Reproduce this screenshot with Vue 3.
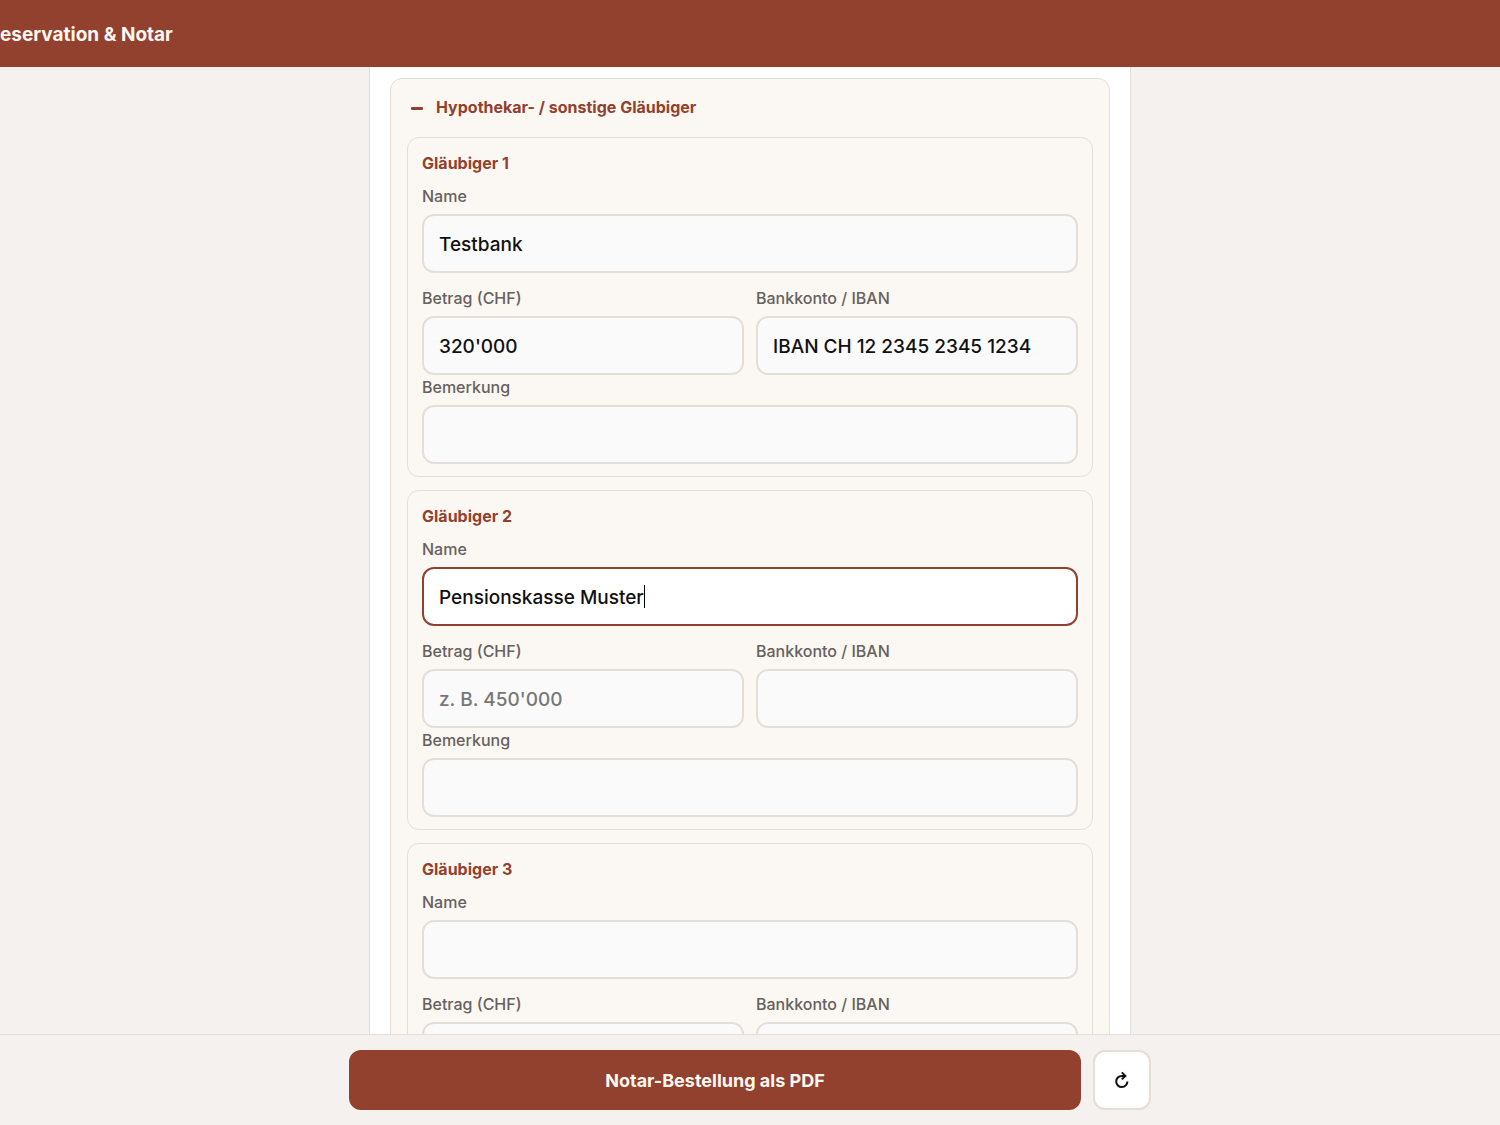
<script setup>
import { reactive } from 'vue'

const creditors = reactive([
  { id: 1, name: 'Testbank', amount: "320'000", iban: 'IBAN CH 12 2345 2345 1234', note: '', active: false },
  { id: 2, name: 'Pensionskasse Muster', amount: '', iban: '', note: '', active: true },
  { id: 3, name: '', amount: '', iban: '', note: '', active: false },
])
</script>

<template>
  <div class="app">
    <header class="topbar">
      <h1>eservation &amp; Notar</h1>
    </header>

    <main class="content">
      <div class="sheet">
        <section class="panel">
          <button type="button" class="panel-toggle" aria-expanded="true">
            <svg class="minus" viewBox="0 0 12 24" aria-hidden="true"><rect x="0" y="12" width="12" height="3" rx="1" /></svg>
            <span>Hypothekar- / sonstige Gläubiger</span>
          </button>

          <fieldset v-for="c in creditors" :key="c.id" class="group">
            <h2>Gläubiger {{ c.id }}</h2>
            <div class="field spaced">
              <label :for="`name-${c.id}`">Name</label>
              <div class="control">
                <input :id="`name-${c.id}`" v-model="c.name" type="text" :class="{ active: c.active }" />
                <span v-if="c.active" class="caret" aria-hidden="true"></span>
              </div>
            </div>
            <div class="row">
              <div class="field">
                <label :for="`amount-${c.id}`">Betrag (CHF)</label>
                <input :id="`amount-${c.id}`" v-model="c.amount" type="text" placeholder="z. B. 450'000" />
              </div>
              <div class="field">
                <label :for="`iban-${c.id}`">Bankkonto / IBAN</label>
                <input :id="`iban-${c.id}`" v-model="c.iban" type="text" />
              </div>
            </div>
            <div class="field">
              <label :for="`note-${c.id}`">Bemerkung</label>
              <input :id="`note-${c.id}`" v-model="c.note" type="text" />
            </div>
          </fieldset>
        </section>
      </div>
    </main>

    <footer class="actions">
      <div class="actions-inner">
        <button type="button" class="primary">Notar-Bestellung als PDF</button>
        <button type="button" class="reset" aria-label="Zurücksetzen">
          <svg viewBox="0 0 16 18" aria-hidden="true">
            <path d="M13.4 10.4A5.6 5.6 0 1 1 7.8 4.9H10.8" />
            <path d="M7.8 1.4L11.4 4.9L7.8 8.4" />
          </svg>
        </button>
      </div>
    </footer>
  </div>
</template>

<style>
body {
  margin: 0;
}
</style>

<style scoped>
.app {
  --brand: #91412d;
  --ground: #f5f1ee;
  --line: #e3ded9;
  display: flex;
  flex-direction: column;
  height: 100vh;
  background: var(--ground);
  font-family: Inter, "Liberation Sans", sans-serif;
  font-size: 16px;
  line-height: 24px;
  color: #111;
}

*,
*::before {
  box-sizing: border-box;
}

h1,
h2 {
  margin: 0;
}

button,
input {
  font: inherit;
}

.topbar {
  flex: none;
  padding: 23px 0 20px;
  background: var(--brand);
  color: #fff7f2;
}

h1 {
  font-size: 19px;
  font-weight: 700;
}

.content {
  flex: 1;
  min-height: 0;
  overflow-y: auto;
  scrollbar-width: none;
}

.sheet {
  max-width: 762px;
  margin: 0 auto;
  padding: 11px 20px 20px;
  border: 1px solid var(--line);
  border-top: 0;
  background: #fff;
}

.panel {
  display: flex;
  flex-direction: column;
  gap: 13px;
  padding: 16px;
  border: 1px solid var(--line);
  border-radius: 12px;
  background: #fbf8f3;
}

.panel-toggle {
  display: flex;
  align-items: center;
  gap: 13px;
  margin-bottom: 5px;
  padding: 0 4px;
  border: 0;
  background: none;
  color: var(--brand);
  font-weight: 700;
  text-align: left;
}

.minus {
  width: 12px;
  height: 24px;
  fill: currentColor;
}

.group {
  min-width: 0;
  margin: 0;
  padding: 13px 14px 12px;
  border: 1px solid var(--line);
  border-radius: 12px;
}

h2 {
  margin-bottom: 11px;
  color: var(--brand);
  font-size: 16px;
  font-weight: 700;
}

.field {
  display: flex;
  flex: 1;
  flex-direction: column;
  gap: 8px;
  min-width: 0;
}

.spaced {
  margin-bottom: 15px;
}

.row {
  display: flex;
  gap: 12px;
  margin-bottom: 2px;
}

label {
  color: #67615d;
  font-size: 16px;
  font-weight: 500;
  line-height: 20px;
}

.control {
  position: relative;
  display: flex;
}

input {
  width: 100%;
  height: 59px;
  padding: 2px 15px 0;
  border: 2px solid var(--line);
  border-radius: 12px;
  outline: 0;
  background: #fafafa;
  color: #111;
  font-size: 19px;
  font-weight: 500;
}

input::placeholder {
  color: #777;
  opacity: 1;
}

input:focus,
input.active {
  border-color: var(--brand);
  background: #fff;
}

.caret {
  position: absolute;
  top: 18px;
  left: 222px;
  width: 1px;
  height: 23px;
  background: #000;
}

.actions {
  flex: none;
  padding: 15px 20px;
  border-top: 1px solid var(--line);
}

.actions-inner {
  display: flex;
  gap: 12px;
  max-width: 802px;
  margin: 0 auto;
}

.primary {
  flex: 1;
  height: 60px;
  padding: 2px 16px 0;
  border: 0;
  border-radius: 12px;
  background: var(--brand);
  color: #fff7f2;
  font-size: 18px;
  font-weight: 700;
}

.reset {
  display: flex;
  align-items: center;
  justify-content: center;
  width: 58px;
  height: 60px;
  padding: 0;
  border: 2px solid var(--line);
  border-radius: 12px;
  background: #fff;
}

.reset svg {
  width: 16px;
  height: 18px;
  fill: none;
  stroke: #111;
  stroke-width: 2;
}
</style>
